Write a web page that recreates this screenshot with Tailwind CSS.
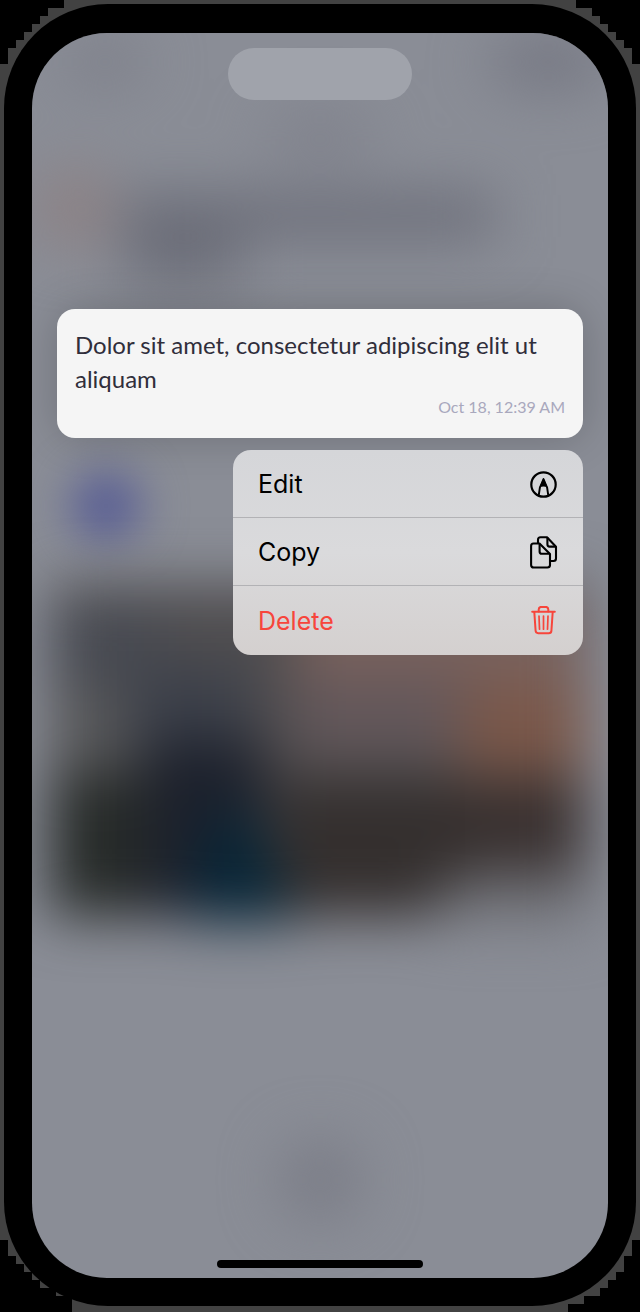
<!DOCTYPE html>
<html lang="en">
<head>
<meta charset="utf-8">
<meta name="viewport" content="width=device-width, initial-scale=1">
<title>Message actions</title>
<script src="https://cdn.jsdelivr.net/npm/@tailwindcss/browser@4"></script>
</head>
<body class="bg-black">
<div class="relative isolate flex min-h-screen flex-col px-1 pt-1 pb-1.5">
  <!-- Stepped metal edge around the phone -->
  <svg class="absolute inset-0 -z-10 h-full w-full" viewBox="0 0 640 1312" preserveAspectRatio="none" shape-rendering="crispEdges" aria-hidden="true">
    <path fill="#424242" d="M64 0H576V8H592V16H600V24H608V32H616V40H624V48H632V64H640V1240H632V1256H624V1272H616V1280H608V1288H600V1296H584V1304H568V1312H72V1296H56V1288H40V1280H32V1272H24V1264H16V1256H8V1240H0V64H8V48H16V40H24V32H32V24H40V16H48V8H64Z"/>
  </svg>
  <div class="flex grow flex-col rounded-[104px] bg-black px-7 pt-[29px] pb-7">
    <main class="relative isolate flex grow flex-col overflow-hidden rounded-[75px] bg-[#8a8d96] px-[25px] pt-[15px] pb-[10px]">
      <!-- Blurred conversation behind the menu -->
      <svg class="absolute inset-0 -z-10 h-full w-full" viewBox="32 33 576 1245" preserveAspectRatio="none" aria-hidden="true">
        <defs>
          <filter id="soft" x="-80" y="-80" width="800" height="1480" filterUnits="userSpaceOnUse" color-interpolation-filters="sRGB"><feGaussianBlur stdDeviation="28"/></filter>
          <filter id="mid" x="-50" y="-50" width="740" height="1420" filterUnits="userSpaceOnUse" color-interpolation-filters="sRGB"><feGaussianBlur stdDeviation="22"/></filter>
        </defs>
        <g filter="url(#soft)">
          <ellipse cx="105" cy="62" rx="42" ry="24" fill="#7d7f89"/>
          <ellipse cx="548" cy="62" rx="62" ry="28" fill="#757782"/>
          <ellipse cx="320" cy="135" rx="58" ry="24" fill="#7f818b"/>
          <circle cx="74" cy="208" r="42" fill="#8c8285"/>
          <rect x="122" y="192" width="372" height="48" fill="#6d6f7a"/>
          <rect x="125" y="225" width="115" height="58" fill="#6b6d78"/>
          <circle cx="320" cy="1180" r="42" fill="#7b7d87"/>
        </g>
        <g filter="url(#mid)">
          <circle cx="106" cy="506" r="36" fill="#5a5f94"/>
        </g>
        <g filter="url(#soft)">
          <rect x="50" y="584" width="536" height="332" fill="#504e50"/>
          <rect x="50" y="610" width="110" height="70" fill="#474a52"/>
          <rect x="50" y="690" width="74" height="76" fill="#57585a"/>
          <rect x="50" y="775" width="110" height="141" fill="#272b29"/>
          <rect x="130" y="665" width="120" height="90" fill="#3c404a"/>
          <rect x="145" y="740" width="120" height="176" fill="#1d212c"/>
          <rect x="295" y="600" width="285" height="90" fill="#7a625d"/>
          <rect x="295" y="675" width="190" height="80" fill="#63575a"/>
          <rect x="460" y="685" width="126" height="90" fill="#7a5749"/>
          <rect x="275" y="780" width="200" height="136" fill="#342f2e"/>
          <rect x="465" y="780" width="121" height="85" fill="#39302f"/>
          <rect x="440" y="880" width="150" height="45" fill="#727379"/>
          <path d="M225 800L260 825L295 922H190L200 860Z" fill="#062537"/>
        </g>
      </svg>

      <div class="mx-auto h-[52px] w-[184px] shrink-0 rounded-full bg-[#a0a3ab]"></div>

      <article class="mt-[209px] flex min-h-[129px] flex-col rounded-[18px] bg-[#f5f5f5] px-[18px] pt-[19px] pb-[18px] font-['Lato','Liberation_Sans',sans-serif] shadow-[0_0_44px_rgba(0,0,0,0.2)]">
        <p class="text-[24px] leading-[34px] text-[#302e3b]">Dolor sit amet, consectetur adipiscing elit ut aliquam</p>
        <time class="self-end text-[16px] leading-[22px] text-[#a9a8bd]" datetime="10-18T00:39">Oct 18, 12:39 AM</time>
      </article>

      <div role="menu" aria-label="Message actions" class="mt-3 w-[350px] self-end divide-y divide-[#b2b2b5] overflow-hidden rounded-[18px] bg-linear-to-b from-[#d5d6d9] via-[#dadadc] to-[#d4d0cf] font-['Inter','Liberation_Sans',sans-serif] text-[25px] text-black">
        <button type="button" role="menuitem" class="flex h-[68px] w-full items-center justify-between pt-0.5 pr-6 pl-[25px]">
          <span>Edit</span>
          <svg class="h-8 w-8" viewBox="0 0 32 32" fill="none" stroke="currentColor" stroke-width="2.2" aria-hidden="true">
            <circle cx="16.5" cy="15.500" r="12.200"/>
            <path stroke-width="1.900" stroke-linejoin="round" d="M11.700 26.500L12.900 18.500L16.500 10L20.100 18.500L21.300 26.500"/>
            <path fill="currentColor" stroke="none" d="M16.500 9L20.900 18.900Q16.500 16.300 12.100 18.900Z"/>
          </svg>
        </button>
        <button type="button" role="menuitem" class="flex h-[68px] w-full items-center justify-between pt-0.5 pr-6 pl-[25px]">
          <span>Copy</span>
          <svg class="h-9 w-8" viewBox="0 0 32 36" fill="none" stroke="currentColor" stroke-width="2.1" stroke-linejoin="round" aria-hidden="true">
            <path d="M6.500 8.500H12.500L23 19V30Q23 32.500 20.400 32.500H6.700Q4.100 32.500 4.100 30V11Q4.100 8.500 6.500 8.500Z"/>
            <path d="M12.600 8.800V16.500Q12.600 18.800 14.800 18.800H22.700"/>
            <path d="M11 8.500V4.800Q11 2.300 13.500 2.300H20L29 11.800V23.500Q29 26 26.500 26H23"/>
            <path d="M20.400 2.600V9.300Q20.400 11.600 22.600 11.600H28.800"/>
          </svg>
        </button>
        <button type="button" role="menuitem" class="flex h-[69px] w-full items-center justify-between pt-0.5 pr-6 pl-[25px] text-[#f7453b]">
          <span>Delete</span>
          <svg class="h-8 w-8" viewBox="0 0 32 32" fill="none" stroke="currentColor" stroke-width="2" stroke-linecap="round" stroke-linejoin="round" aria-hidden="true">
            <path d="M5.200 5.800H27.800"/>
            <path d="M11.700 5.600V3.500Q11.700 0.900 14.100 0.900H18.900Q21.300 0.900 21.300 3.500V5.600"/>
            <path d="M7.300 6L8.600 24.800Q8.800 27.200 11.200 27.200H21.800Q24.200 27.200 24.400 24.800L25.700 6"/>
            <path stroke-width="1.700" d="M12 10L12.500 23.200M16.500 10V23.200M21 10L20.500 23.200"/>
          </svg>
        </button>
      </div>

      <div class="mx-auto mt-auto h-2 w-[206px] rounded-full bg-black"></div>
    </main>
  </div>
</div>
</body>
</html>
